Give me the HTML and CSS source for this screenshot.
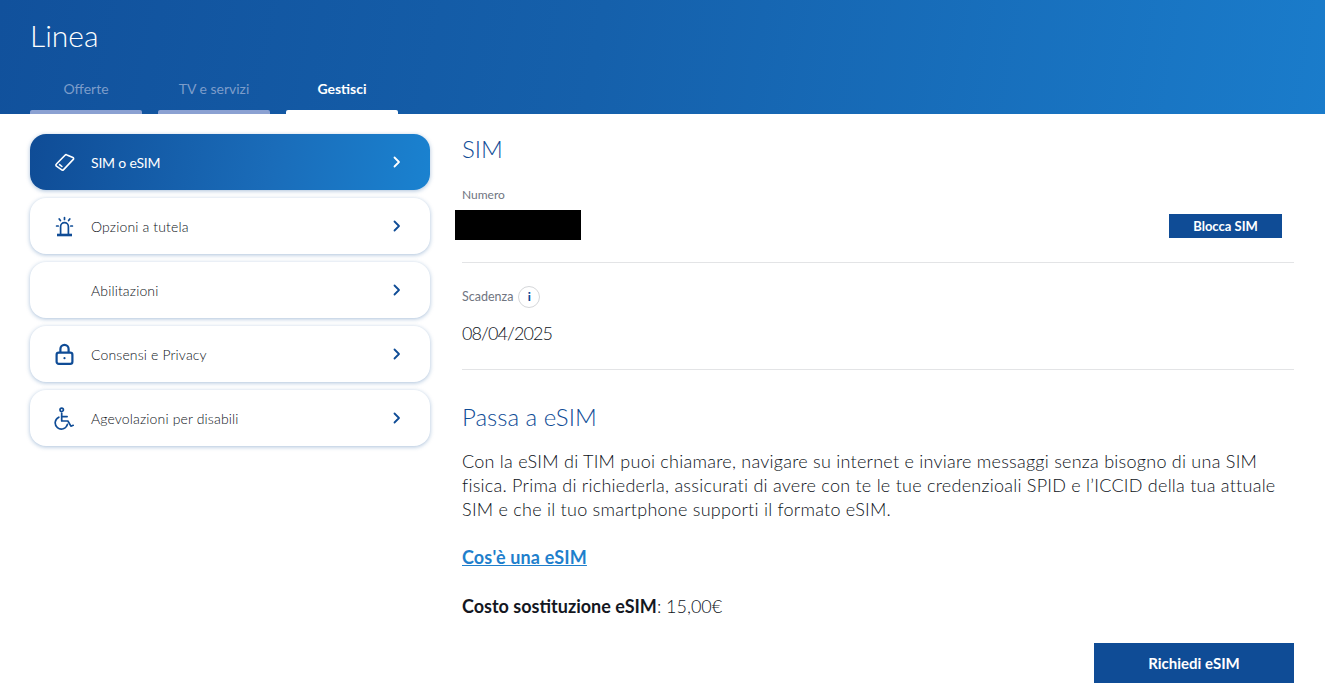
FILE: index.html
```html
<!DOCTYPE html>
<html lang="it">
<head>
<meta charset="utf-8">
<title>Linea</title>
<link rel="stylesheet" href="styles.css">
</head>
<body>
<header class="hero">
  <h1 class="hero-title">Linea</h1>
  <nav class="tabs">
    <a class="tab">Offerte</a>
    <a class="tab">TV e servizi</a>
    <a class="tab tab-active">Gestisci</a>
  </nav>
</header>
<div class="page">
  <aside class="menu">
    <a class="menu-item menu-item-active">
      <span class="menu-icon"><svg viewBox="0 0 24 24" width="24" height="24" fill="none" stroke="#fff" stroke-width="1.6" stroke-linejoin="round" stroke-linecap="round"><path d="M3.4 14 12 5.2a1.6 1.6 0 0 1 1.9-.3l6 2.6a1.2 1.2 0 0 1 .4 1.9L10.6 19.6a1.6 1.6 0 0 1-2.2.1l-5-3.5a1.5 1.5 0 0 1 0-2.2Z"/><path d="m6.6 14.6 2.3 1.9"/></svg></span>
      <span class="menu-label">SIM o eSIM</span>
      <svg class="chev" viewBox="0 0 10 14" width="10" height="14" fill="none" stroke="#fff" stroke-width="1.8" stroke-linecap="round" stroke-linejoin="round"><path d="m2.5 2.5 4.5 4.5-4.5 4.5"/></svg>
    </a>
    <a class="menu-item">
      <span class="menu-icon"><svg viewBox="0 0 24 24" width="24" height="24" fill="none" stroke="#0f4c96" stroke-width="1.7"><path d="M7.6 20v-7.5a3.9 3.9 0 0 1 7.8 0V20"/><path d="M4 21h15" stroke-width="2.6"/><path d="M11.5 3.5v2M6.2 5l1.2 1.6M16.8 5l-1.2 1.6M3.6 12h1.6M17.8 12h1.6" stroke-linecap="round"/></svg></span>
      <span class="menu-label">Opzioni a tutela</span>
      <svg class="chev" viewBox="0 0 10 14" width="10" height="14" fill="none" stroke="#0f4c96" stroke-width="1.8" stroke-linecap="round" stroke-linejoin="round"><path d="m2.5 2.5 4.5 4.5-4.5 4.5"/></svg>
    </a>
    <a class="menu-item">
      <span class="menu-icon"></span>
      <span class="menu-label">Abilitazioni</span>
      <svg class="chev" viewBox="0 0 10 14" width="10" height="14" fill="none" stroke="#0f4c96" stroke-width="1.8" stroke-linecap="round" stroke-linejoin="round"><path d="m2.5 2.5 4.5 4.5-4.5 4.5"/></svg>
    </a>
    <a class="menu-item">
      <span class="menu-icon"><svg viewBox="0 0 24 24" width="24" height="24" fill="none" stroke="#0f4c96" stroke-width="2.2"><rect x="3.6" y="10.6" width="15.8" height="11.3" rx="2.2"/><path d="M7.4 10.6V7a4.1 4.1 0 0 1 8.2 0v3.6"/><circle cx="11.5" cy="16.2" r="1.1" fill="#0f4c96" stroke="none"/></svg></span>
      <span class="menu-label">Consensi e Privacy</span>
      <svg class="chev" viewBox="0 0 10 14" width="10" height="14" fill="none" stroke="#0f4c96" stroke-width="1.8" stroke-linecap="round" stroke-linejoin="round"><path d="m2.5 2.5 4.5 4.5-4.5 4.5"/></svg>
    </a>
    <a class="menu-item">
      <span class="menu-icon"><svg viewBox="0 0 24 24" width="24" height="24" fill="none" stroke="#0f4c96" stroke-width="1.7" stroke-linecap="round" stroke-linejoin="round"><circle cx="8.7" cy="3.8" r="1.7"/><path d="M8.7 7v8h6.2l3 5.2 2.3-.9"/><path d="M8.7 10.6h5.4"/><path d="M5.8 11.2a6.2 6.2 0 1 0 8.6 7.2"/></svg></span>
      <span class="menu-label">Agevolazioni per disabili</span>
      <svg class="chev" viewBox="0 0 10 14" width="10" height="14" fill="none" stroke="#0f4c96" stroke-width="1.8" stroke-linecap="round" stroke-linejoin="round"><path d="m2.5 2.5 4.5 4.5-4.5 4.5"/></svg>
    </a>
  </aside>
  <main class="content">
    <h2 class="section-title">SIM</h2>
    <div class="field field-number">
      <div class="field-label">Numero</div>
      <div class="number-row">
        <div class="redacted"></div>
        <button class="btn btn-small">Blocca SIM</button>
      </div>
    </div>
    <div class="field field-date">
      <div class="field-label label-row">Scadenza <span class="info">i</span></div>
      <div class="field-value">08/04/2025</div>
    </div>
    <h2 class="esim-title">Passa a eSIM</h2>
    <p class="text text-intro">Con la eSIM di TIM puoi chiamare, navigare su internet e inviare messaggi senza bisogno di una SIM fisica. Prima di richiederla, assicurati di avere con te le tue credenzioali SPID e l’ICCID della tua attuale SIM e che il tuo smartphone supporti il formato eSIM.</p>
    <p class="text link-row"><a class="link">Cos'è una eSIM</a></p>
    <p class="text cost"><strong>Costo sostituzione eSIM</strong>: 15,00€</p>
    <div class="actions"><button class="btn btn-large">Richiedi eSIM</button></div>
  </main>
</div>
</body>
</html>
```
FILE: styles.css
```css
* { box-sizing: border-box; }
html, body { margin: 0; padding: 0; }
body {
  background: #fff;
  color: #0d1220;
  font-family: "Lato", "Open Sans", sans-serif;
  font-weight: 300;
  height: 699px;
  overflow: hidden;
}
.hero {
  height: 114px;
  background: linear-gradient(100deg, #11519c 0%, #1560ab 45%, #1a7ccb 100%);
  padding: 17px 30px 0;
  display: flex;
  flex-direction: column;
}
.hero-title {
  margin: 0;
  font-size: 30px;
  line-height: 36px;
  font-weight: 300;
  color: #fff;
}
.tabs {
  margin-top: auto;
  display: flex;
  gap: 16px;
}
.tab {
  width: 112px;
  height: 38px;
  display: flex;
  flex-direction: column;
  line-height: 26px;
  text-align: center;
  font-size: 14px;
  font-weight: 400;
  color: #7d9dca;
}
.tab::after {
  content: "";
  margin-top: auto;
  height: 4px;
  border-radius: 2px 2px 0 0;
  background: #8ba1d2;
}
.tab-active {
  color: #fff;
  font-weight: 700;
}
.tab-active::after { background: #fff; }
.page {
  display: flex;
  align-items: flex-start;
  padding: 20px 31px 0 30px;
  gap: 32px;
}
.menu {
  width: 400px;
  flex: none;
  display: flex;
  flex-direction: column;
  gap: 8px;
}
.menu-item {
  height: 56px;
  display: flex;
  align-items: center;
  padding: 0 28px 0 23px;
  border-radius: 16px;
  background: #fff;
  box-shadow: 0 1px 4px rgba(15, 76, 150, .35);
  font-size: 14px;
  font-weight: 300;
  letter-spacing: .15px;
  color: #0d1220;
}
.menu-item-active {
  background: linear-gradient(100deg, #0f4c96 0%, #1a6cb9 60%, #1a82d0 100%);
  color: #fff;
  font-weight: 400;
  letter-spacing: -.2px;
}
.menu-icon {
  width: 24px;
  height: 24px;
  flex: none;
  display: flex;
  margin-right: 14px;
}
.menu-label { flex: 1; }
.chev { flex: none; }
.content {
  flex: 1;
  min-width: 0;
}
.section-title {
  margin: 0;
  font-size: 24px;
  line-height: 30px;
  font-weight: 300;
  color: #0f4c96;
}
.field-number {
  margin-top: 23px;
  height: 76px;
  border-bottom: 1px solid #e3e4e6;
}
.field-label {
  font-size: 12px;
  line-height: 16px;
  font-weight: 400;
  color: #70757f;
}
.number-row {
  display: flex;
  justify-content: space-between;
  align-items: center;
  margin-top: 7px;
  padding-right: 12px;
}
.redacted {
  width: 126px;
  height: 30px;
  margin-left: -7px;
  background: #000;
}
.btn {
  border: 0;
  background: #0f4c96;
  color: #fff;
  font-family: inherit;
  font-weight: 700;
}
.btn-small {
  width: 113px;
  height: 24px;
  margin-top: 2px;
  font-size: 13px;
}
.field-date {
  height: 107px;
  padding-top: 23px;
  border-bottom: 1px solid #e3e4e6;
}
.label-row {
  display: flex;
  align-items: center;
  gap: 5px;
  font-size: 12.5px;
}
.info {
  width: 22px;
  height: 22px;
  border: 1px solid #d5d7da;
  border-radius: 50%;
  display: flex;
  align-items: center;
  justify-content: center;
  color: #0f4c96;
  font-weight: 900;
  font-size: 12px;
}
.field-value {
  margin-top: 13px;
  font-size: 18px;
  line-height: 24px;
  letter-spacing: -.9px;
}
.esim-title {
  margin: 31px 0 0;
  font-size: 24px;
  line-height: 32px;
  font-weight: 300;
  color: #0f4c96;
}
.text {
  margin: 16px 0 0;
  font-size: 18px;
  line-height: 24px;
  font-weight: 300;
}
.text-intro { letter-spacing: .25px; }
.link-row { margin-top: 24px; }
.link {
  color: #1f7fcc;
  font-weight: 700;
  letter-spacing: .15px;
  text-decoration: underline;
}
.cost { margin-top: 25px; }
.cost strong { font-weight: 700; color: #14171f; }
.actions {
  display: flex;
  justify-content: flex-end;
  margin-top: 25px;
}
.btn-large {
  width: 200px;
  height: 40px;
  font-size: 15px;
}
```
